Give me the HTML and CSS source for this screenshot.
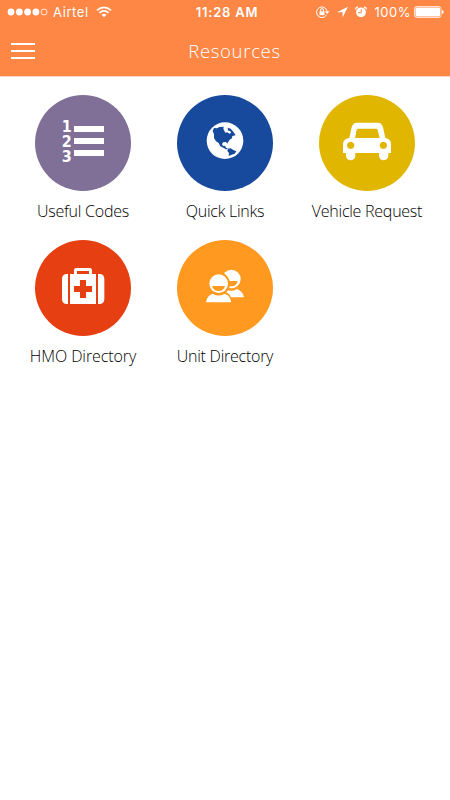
FILE: index.html
```html
<!DOCTYPE html>
<html lang="en">
<head>
	<meta charset="utf-8" />
	<title>Resources</title>
	<link rel="stylesheet" href="styles.css">
</head>
<body>
	<header>
		<div class="status">
			<div class="carrier">
				<svg width="42" height="8" viewBox="0 0 42 8" fill="#fff">
					<circle cx="4" cy="4" r="3.4"/>
					<circle cx="12.3" cy="4" r="3.4"/>
					<circle cx="20.6" cy="4" r="3.4"/>
					<circle cx="28.9" cy="4" r="3.4"/>
					<circle cx="37.1" cy="4" r="3" fill="none" stroke="#fff" stroke-width=".8"/>
				</svg>
				<span class="network">Airtel</span>
				<svg width="16" height="12" viewBox="0 0 16 12" fill="none" stroke="#fff" stroke-width="1.7">
					<path d="M1 4.3Q8-1.6 15 4.3M3.4 6.8Q8 3 12.6 6.8"/>
					<path d="M5.5 8.7Q8 6.7 10.5 8.7L8 11.2z" fill="#fff" stroke="none"/>
				</svg>
			</div>
			<span class="time">11:28 AM</span>
			<div class="battery">
				<svg width="54" height="14" viewBox="0 0 54 14" fill="none" stroke="#fff">
					<path d="M11.6 9.6A5.3 5.3 0 1 1 12 6"/>
					<path d="M9.9 6.3h4.6L12.2 9z" fill="#fff" stroke="none"/>
					<rect x="4.5" y="6.3" width="5" height="3.8" fill="#fff" stroke="none"/>
					<path d="M5.6 6.5V5a1.4 1.5 0 0 1 2.8 0v1.5"/>
					<path d="M33 1.8L27.6 12.6V7.3H22z" fill="#fff" stroke="none"/>
					<circle cx="46" cy="7.3" r="4.9" fill="#fff" stroke="none"/>
					<path d="M40.4 4.3Q40.8 2.3 43 1.8M49 1.8Q51.2 2.3 51.6 4.3" stroke-width="1.3"/>
					<path d="M46.3 4.2v3.5H43" stroke="#fe8746"/>
				</svg>
				<span class="percent">100%</span>
				<svg width="30" height="12" viewBox="0 0 30 12" fill="#fff">
					<rect x=".5" y=".5" width="26.5" height="11" rx="2" fill="none" stroke="#fff" stroke-opacity=".75"/>
					<rect x="1.5" y="1.5" width="24.5" height="9" rx="1"/>
					<path d="M28 4q1.7.5 1.7 2T28 8z"/>
				</svg>
			</div>
		</div>
		<div class="bar">
			<div class="menu"><i></i><i></i><i></i></div>
			<h1>Resources</h1>
		</div>
	</header>

	<div class="grid">
		<div class="item">
			<div class="circle purple">
				<svg viewBox="45 30 288 288" fill="#fff">
					<g class="digits">
						<text x="125" y="140" textLength="30" lengthAdjust="spacingAndGlyphs">1</text>
						<text x="125" y="185" textLength="30" lengthAdjust="spacingAndGlyphs">2</text>
						<text x="125" y="230" textLength="30" lengthAdjust="spacingAndGlyphs">3</text>
					</g>
					<path d="M162 123h90v18h-90zM162 159h90v18h-90zM162 195h90v18h-90z"/>
				</svg>
			</div>
			<span class="label">Useful Codes</span>
		</div>
		<div class="item">
			<div class="circle blue">
				<svg viewBox="51 30 288 288" fill="#174a9c">
					<circle cx="195" cy="167" r="55" fill="#fff"/>
					<path d="M158 138L162 129L171 130L178 126L191 125L190 133L196 137L204 135L203 128L212 131L220 140L227 151L217 153L216 160L209 164L204 172L202 176L198 171L189 172L186 178L189 183L195 182L198 188L206 192L198 193L190 188L181 184L176 174L168 169L162 159L162 148z"/>
					<path d="M192 136l9-3 4 4 6 1 2 6-5 2-6-4-6 1z" fill="#fff"/>
					<path d="M204 191L212 190L220 195L229 199L224 206L215 209L206 213L207 204L202 198z"/>
				</svg>
			</div>
			<span class="label">Quick Links</span>
		</div>
		<div class="item">
			<div class="circle yellow">
				<svg viewBox="57 30 288 288" fill="#fff">
					<path fill-rule="evenodd" d="M148 159L155 127Q158 113 171 113H233Q246 113 249 127L256 159Q273 161 273 178V204H265V212A14 14 0 0 1 237 212V204H166V212A14 14 0 0 1 138 212V204H129V178Q129 161 148 159zM165 159H239L233 134Q232 131 228 131H175Q171 131 170 134zM152 170a11 11 0 1 0 .1 0zM250 170a11 11 0 1 0 .1 0z"/>
				</svg>
			</div>
			<span class="label">Vehicle Request</span>
		</div>
		<div class="item">
			<div class="circle red">
				<svg viewBox="45 30 288 288" fill="#fff">
					<path d="M144 132V222H141Q126 222 126 207V147Q126 132 141 132zM234 132V222H238Q253 222 253 207V147Q253 132 238 132z"/>
					<path fill-rule="evenodd" d="M150 132H162V121Q162 114 169 114H209Q216 114 216 121V132H228V222H150zM171 123V132H207V123zM180 150V168H162V186H180V204H198V186H216V168H198V150z"/>
				</svg>
			</div>
			<span class="label wide">HMO Directory</span>
		</div>
		<div class="item">
			<div class="circle orange">
				<svg viewBox="51 30 288 288" fill="#fff">
					<circle cx="214" cy="147" r="28"/>
					<path d="M184 202Q188 181 203 179Q215 187 230 177Q248 182 252 202z"/>
					<path d="M193 153H233Q230 169 214 169Q196 169 193 153z" fill="#ff991f"/>
					<circle cx="176" cy="161" r="34" fill="#ff991f"/>
					<path d="M132 222Q134 190 160 183H191Q216 190 219 222z" fill="#ff991f"/>
					<circle cx="176" cy="161" r="28"/>
					<path d="M138 217Q141 196 158 191Q176 202 194 191Q211 196 214 217z"/>
					<path d="M156 168H195Q191 183 176 183Q160 183 156 168z" fill="#ff991f"/>
				</svg>
			</div>
			<span class="label">Unit Directory</span>
		</div>
	</div>
</body>
</html>
```
FILE: styles.css
```css
body
{
	margin: 0;
	background-color: white;
	font-family: "Open Sans", "Noto Sans", sans-serif;
}

header
{
	height: 77px;
	box-sizing: border-box;
	background-color: #fe8746;
	border-bottom: 1px solid #ffd9c4;
	color: white;
}

.status
{
	display: grid;
	grid-template-columns: 1fr auto 1fr;
	height: 24px;
	padding: 0 6px 0 7px;
	align-items: center;
	font-family: Inter, sans-serif;
	font-size: 13px;
}

.carrier, .battery
{
	display: flex;
	align-items: center;
}

.battery
{
	justify-content: flex-end;
}

.network
{
	margin: 0 7px 0 4px;
	letter-spacing: 0.6px;
}

.time
{
	margin-left: 3px;
	font-weight: 600;
	letter-spacing: 0.8px;
}

.percent
{
	margin: 0 3px 0 6px;
	letter-spacing: 0.5px;
}

.bar
{
	display: grid;
	grid-template-columns: 1fr auto 1fr;
	align-items: center;
	height: 52px;
	padding: 0 10px;
}

.menu
{
	display: grid;
	gap: 5px;
	width: 24px;
	margin-top: 1px;
	margin-left: 1px;
}

.menu i
{
	height: 2px;
	background-color: white;
}

h1
{
	margin: 1px 0 0 19px;
	font-size: 18.5px;
	font-weight: 300;
	letter-spacing: 0.7px;
}

.grid
{
	display: grid;
	grid-template-columns: repeat(3, 1fr);
	grid-auto-rows: 145px;
	padding: 18px 12px;
}

.item
{
	display: flex;
	flex-direction: column;
	align-items: center;
}

.circle
{
	width: 96px;
	height: 96px;
	border-radius: 50%;
}

.circle svg
{
	display: block;
}

.digits
{
	font-family: "DejaVu Sans", sans-serif;
	font-weight: bold;
	font-size: 48px;
}

.purple
{
	background-color: #806f96;
}

.blue
{
	background-color: #174a9c;
}

.yellow
{
	background-color: #e0b600;
}

.red
{
	background-color: #e63f12;
}

.orange
{
	background-color: #ff991f;
}

.label
{
	margin-top: 9px;
	font-size: 16px;
	font-weight: 300;
	line-height: 22px;
	letter-spacing: -0.25px;
	white-space: nowrap;
	color: black;
}

.label.wide
{
	letter-spacing: -0.08px;
}
```
